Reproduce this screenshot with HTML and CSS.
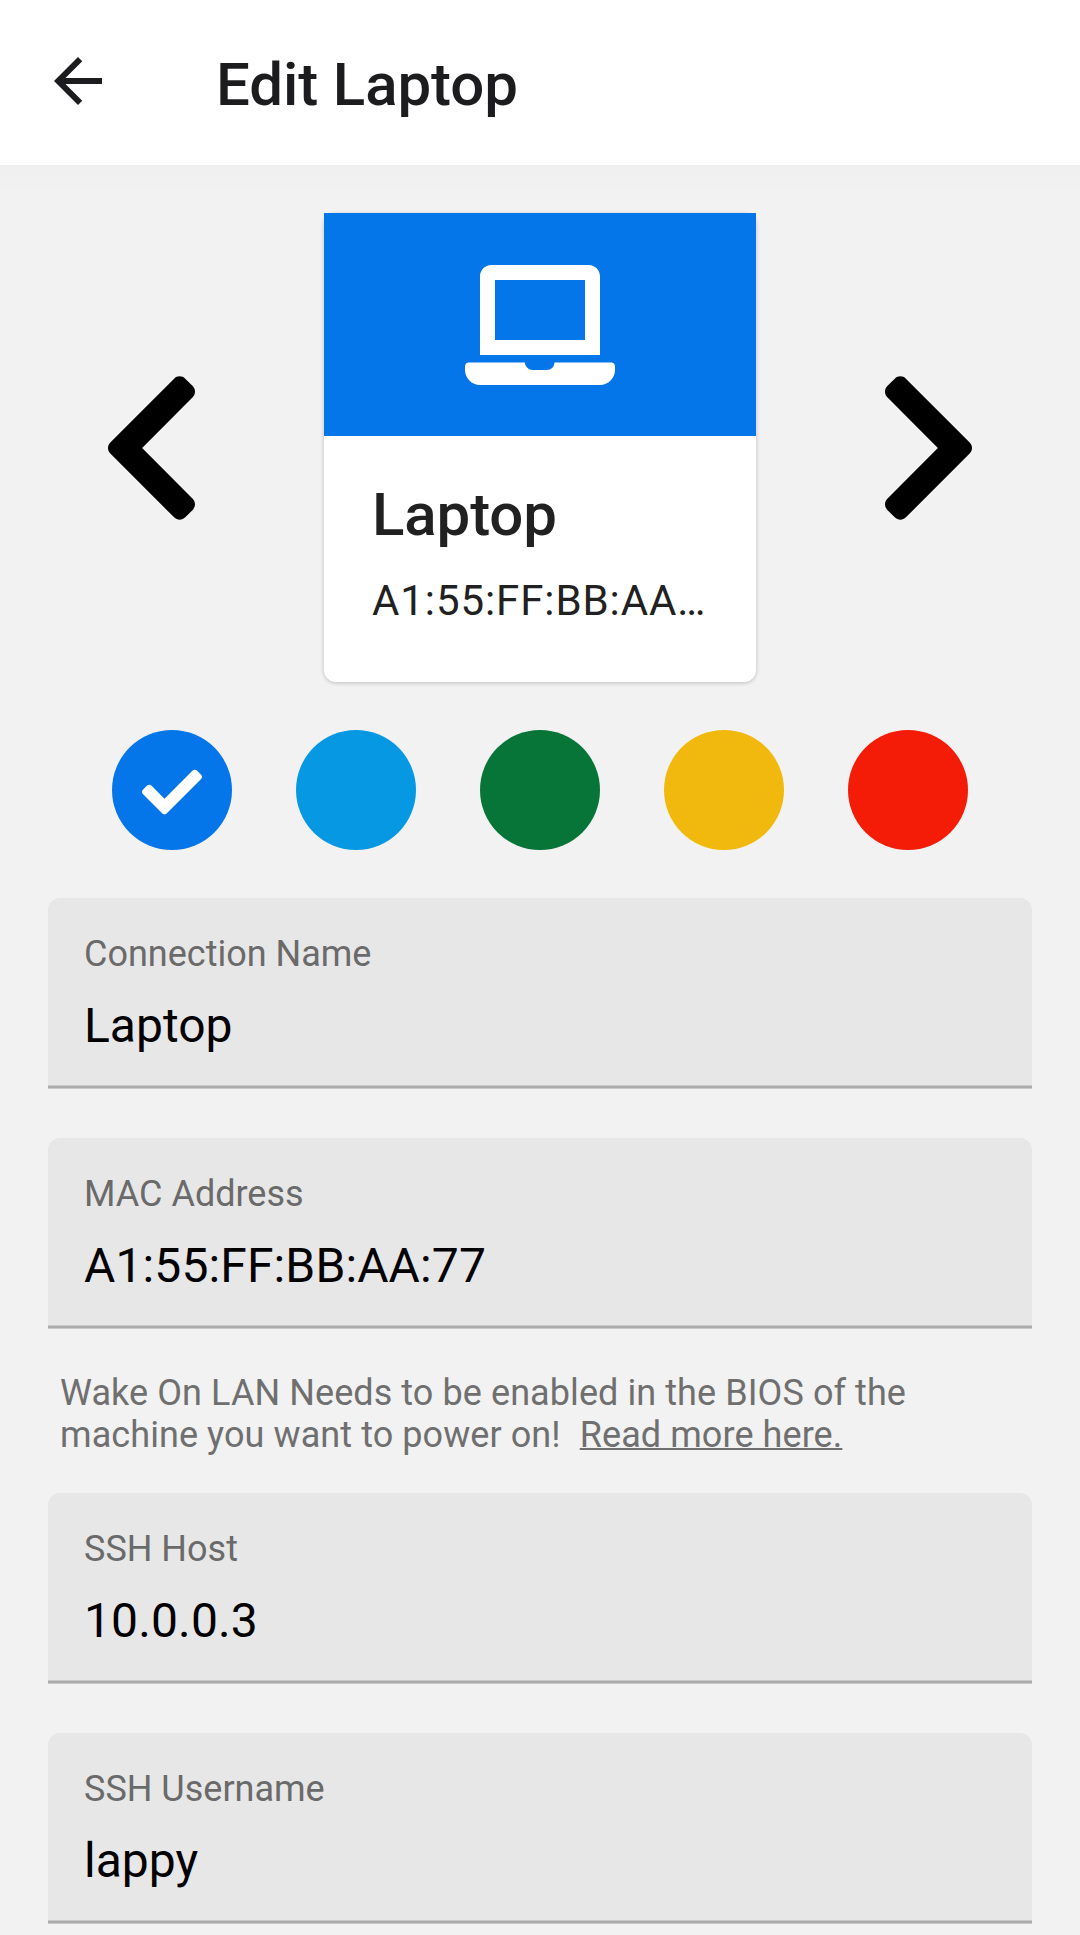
FILE: index.html
```html
<!DOCTYPE html>
<html lang="en">
<head>
<meta charset="utf-8">
<title>Edit Laptop</title>
<link rel="stylesheet" href="styles.css">
</head>
<body>
<header class="appbar">
  <svg class="back" viewBox="0 0 24 24" role="img" aria-label="Back"><path d="M20 11H7.83l5.59-5.59L12 4l-8 8 8 8 1.41-1.41L7.83 13H20v-2z"/></svg>
  <h1 class="title">Edit Laptop</h1>
</header>
<main class="content">
  <section class="picker">
    <svg class="chevron" viewBox="0 0 320 512" role="img" aria-label="Previous"><path d="M34.52 239.03L228.87 44.69c9.37-9.37 24.57-9.37 33.94 0l22.67 22.67c9.36 9.36 9.37 24.52.04 33.9L131.49 256l154.02 154.75c9.34 9.38 9.32 24.54-.04 33.9l-22.67 22.67c-9.37 9.37-24.57 9.37-33.94 0L34.52 272.97c-9.37-9.37-9.37-24.57 0-33.94z"/></svg>
    <article class="card">
      <div class="cover">
        <svg class="laptop" viewBox="0 0 640 512"><path d="M624 416H381.54c-.74 19.81-14.71 32-32.74 32H288c-18.69 0-33.02-17.47-32.77-32H16c-8.8 0-16 7.2-16 16v16c0 35.2 28.8 64 64 64h512c35.2 0 64-28.8 64-64v-16c0-8.8-7.2-16-16-16zM576 48c0-26.4-21.6-48-48-48H112C85.6 0 64 21.6 64 48v336h512V48zm-64 272H128V64h384v256z"/></svg>
      </div>
      <div class="card-body">
        <h2 class="card-title">Laptop</h2>
        <p class="card-mac">A1:55:FF:BB:AA…</p>
      </div>
    </article>
    <svg class="chevron" viewBox="0 0 320 512" role="img" aria-label="Next"><path d="M285.48 272.97L91.13 467.31c-9.37 9.37-24.57 9.37-33.94 0l-22.67-22.67c-9.36-9.36-9.37-24.52-.04-33.9L188.51 256 34.48 101.25c-9.34-9.38-9.32-24.54.04-33.9l22.67-22.67c9.37-9.37 24.57-9.37 33.94 0L285.48 239.03c9.37 9.37 9.37 24.57 0 33.94z"/></svg>
  </section>
  <section class="colors">
    <span class="swatch blue"><svg class="check" viewBox="0 0 512 512"><path d="M173.898 439.404l-166.4-166.4c-9.997-9.997-9.997-26.206 0-36.204l36.203-36.204c9.997-9.998 26.207-9.998 36.204 0L192 312.69 432.095 72.596c9.997-9.997 26.207-9.997 36.204 0l36.203 36.204c9.997 9.997 9.997 26.206 0 36.204l-294.4 294.401c-9.998 9.997-26.207 9.997-36.204-.001z"/></svg></span>
    <span class="swatch sky"></span>
    <span class="swatch green"></span>
    <span class="swatch yellow"></span>
    <span class="swatch red"></span>
  </section>
  <section class="fields">
    <div class="field"><span class="label">Connection Name</span><span class="value">Laptop</span></div>
    <div class="field"><span class="label">MAC Address</span><span class="value address">A1:55:FF:BB:AA:77</span></div>
  </section>
  <p class="hint">Wake On LAN Needs to be enabled in the BIOS of the machine you want to power on!&nbsp; <a class="link">Read more here.</a></p>
  <section class="fields">
    <div class="field"><span class="label">SSH Host</span><span class="value address">10.0.0.3</span></div>
    <div class="field"><span class="label">SSH Username</span><span class="value">lappy</span></div>
  </section>
</main>
</body>
</html>
```
FILE: styles.css
```css
* { box-sizing: border-box; }

body {
  margin: 0;
  height: 1935px;
  overflow: hidden;
  background: #f2f2f2;
  color: #000;
  font-family: Roboto, sans-serif;
}

h1, h2, p { margin: 0; }

.appbar {
  display: flex;
  height: 165px;
  padding: 45px 42px 0;
  background: #fff;
}

.back { width: 72px; height: 72px; fill: #1c1c1e; }

.title {
  margin: 5px 0 0 102px;
  color: #1c1c1e;
  font-size: 60px;
  font-weight: 500;
  letter-spacing: -0.1px;
  line-height: 70px;
}

.content {
  padding: 48px 48px 0;
  background: linear-gradient(#efefef, #f2f2f2 30px);
}

.picker {
  display: flex;
  justify-content: space-between;
  align-items: center;
  height: 469px;
  padding: 0 51px;
}

.chevron { width: 105px; height: 168px; }

.card {
  width: 432px;
  height: 469px;
  border-radius: 12px;
  background: #fff;
  box-shadow: 0 1px 4px rgba(0, 0, 0, 0.22);
}

.cover {
  display: flex;
  justify-content: center;
  align-items: center;
  height: 223px;
  background: #0476e9;
}

.laptop { width: 150px; height: 120px; fill: #fff; }

.card-body { padding: 43px 48px 0; color: #212121; }

.card-title {
  font-size: 60px;
  font-weight: 500;
  letter-spacing: -0.1px;
  line-height: 72px;
}

.card-mac {
  margin-top: 20px;
  font-size: 42px;
  letter-spacing: 0.92px;
  line-height: 60px;
  white-space: nowrap;
}

.colors {
  display: flex;
  justify-content: center;
  gap: 64px;
  padding: 48px 0;
}

.swatch {
  display: flex;
  justify-content: center;
  width: 120px;
  height: 120px;
  padding-top: 32px;
  border-radius: 50%;
}

.blue { background: #0476e9; }
.sky { background: #0798e4; }
.green { background: #077537; }
.yellow { background: #f1b90d; }
.red { background: #f41b07; }

.check { width: 60px; height: 60px; fill: #fff; }

.fields { display: grid; gap: 49px; }

.field {
  display: flex;
  flex-direction: column;
  height: 191px;
  padding: 35px 36px 0;
  border-radius: 12px 12px 0 0;
  background: linear-gradient(#e7e7e7 187px, #c9c9c9 187px 188px, #ababab 188px 190px, #c9c9c9 190px);
}

.label {
  color: #6a6a6a;
  font-size: 36px;
  line-height: 42px;
}

.value {
  margin-top: 23px;
  font-size: 48px;
  line-height: 56px;
}

.address { letter-spacing: 0.13px; }

.hint {
  padding: 43px 12px 37px;
  color: #6f6f6f;
  font-size: 36px;
  letter-spacing: 0.08px;
  line-height: 42px;
}

.link {
  margin-left: 1px;
  text-decoration: underline;
  text-decoration-thickness: 2px;
}
```
